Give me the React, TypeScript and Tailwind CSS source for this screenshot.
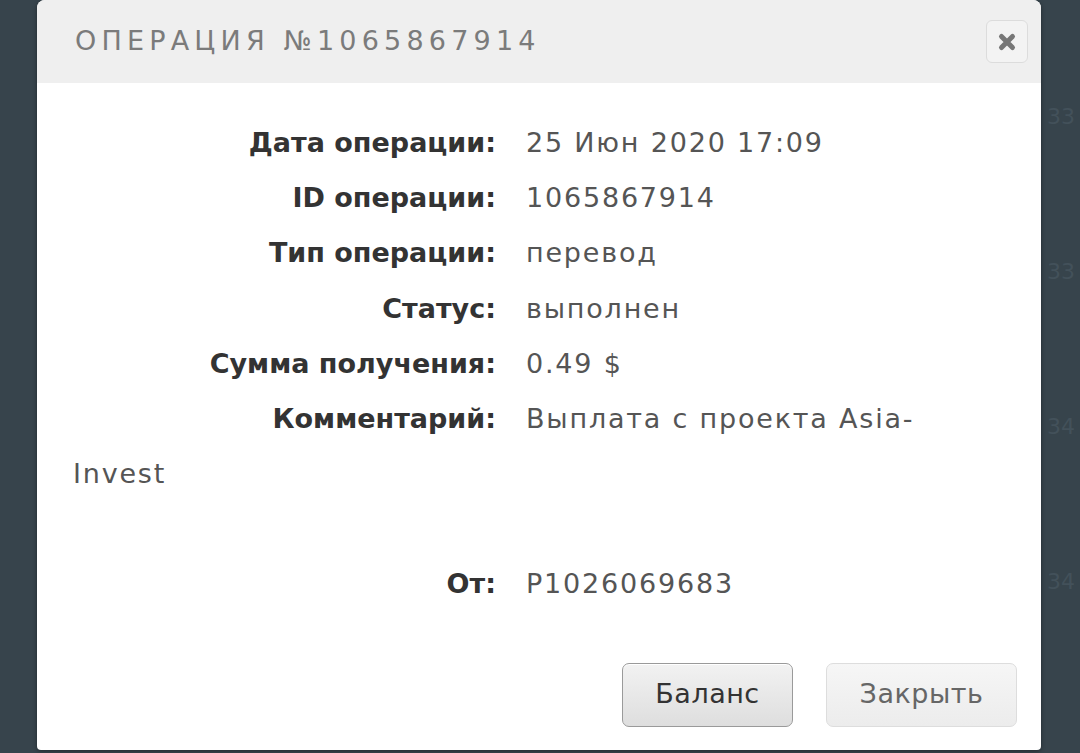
const rows: [string, string][] = [
  ['Дата операции:', '25 Июн 2020 17:09'],
  ['ID операции:', '1065867914'],
  ['Тип операции:', 'перевод'],
  ['Статус:', 'выполнен'],
  ['Сумма получения:', '0.49 $'],
];

const sideText = ['33', '33', '34', '34'];

function Row({ label, value }: { label: string; value: string }) {
  return (
    <div>
      <span className="inline-block w-[423px] text-right font-semibold tracking-normal text-[#333]">{label}</span>
      <span className="ml-[30px] text-[#555]">{value}</span>
    </div>
  );
}

export default function App() {
  return (
    <div className="flex h-[753px] w-[1080px] overflow-hidden bg-[#37444c] pl-[37px] font-['DejaVu_Sans',sans-serif]">
      <div className="h-[750px] w-[1004px] shrink-0 overflow-hidden rounded-b-[4px] rounded-t-[8px] bg-white shadow-[0_1px_4px_rgba(0,0,0,0.4)]">
        <div className="flex h-[83px] items-center justify-between bg-[#efefef] pl-[38px] pr-[13px]">
          <h1 className="text-[27px] tracking-[5.2px] text-[#7b7b7b]">ОПЕРАЦИЯ №1065867914</h1>
          <button className="flex h-[43px] w-[42px] items-center justify-center rounded-[6px] border border-[#dcdcdc] bg-[#f3f3f3]">
            <svg width="20" height="20" viewBox="0 0 20 20">
              <path d="M4.5 4.5 L15.5 15.5 M15.5 4.5 L4.5 15.5" stroke="#777" strokeWidth="5" strokeLinecap="round" />
            </svg>
          </button>
        </div>

        <div className="pl-[36px] pr-[80px] pt-[32px] text-[27px] leading-[55.2px] tracking-[1.8px]">
          {rows.map(([l, v]) => (
            <Row key={l} label={l} value={v} />
          ))}
          <div className="text-[#555]">
            <span className="inline-block w-[423px] text-right font-semibold tracking-normal text-[#333]">Комментарий:</span>
            <span className="ml-[30px]">Выплата с проекта Asia-Invest</span>
          </div>
          <div className="h-[55px]" />
          <Row label="От:" value="P1026069683" />
        </div>

        <div className="mt-[51px] flex justify-end gap-[33px] pr-[24px]">
          <button className="h-[64px] w-[171px] rounded-[7px] border border-[#9a9a9a] bg-gradient-to-b from-[#f2f2f2] to-[#dedede] text-[27px] tracking-[0.5px] text-[#333] shadow-[inset_0_1px_0_#fff]">
            Баланс
          </button>
          <button className="h-[64px] w-[191px] rounded-[7px] border border-[#dddddd] bg-gradient-to-b from-[#f6f6f6] to-[#ececec] text-[27px] tracking-[0.5px] text-[#666]">
            Закрыть
          </button>
        </div>
      </div>

      <div className="flex flex-1 flex-col gap-[122px] pl-[6px] pt-[100px] text-[22px] text-[#43515a]">
        {sideText.map((t, i) => (
          <span key={i}>{t}</span>
        ))}
      </div>
    </div>
  );
}
